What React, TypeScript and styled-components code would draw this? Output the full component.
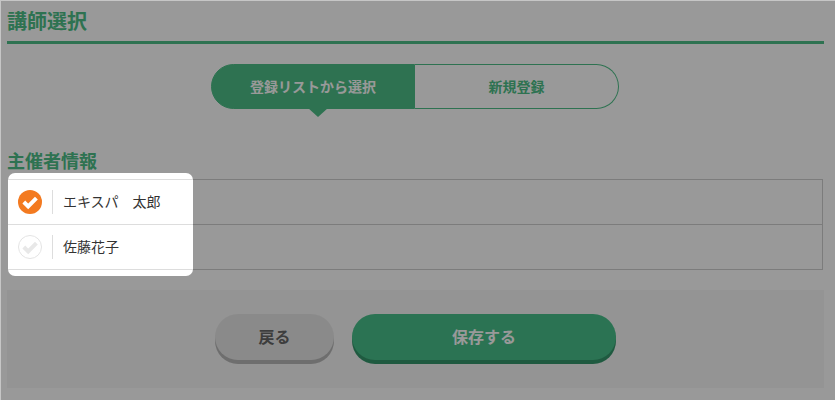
import { FunctionComponent } from "react";
import styled, { createGlobalStyle } from "styled-components";

const FONT = `"Liberation Sans", "Noto Sans CJK JP", sans-serif`;
const GREEN = "#4dbf87";

const GlobalStyle = createGlobalStyle`
  html, body {
    margin: 0;
    padding: 0;
    background: #c6c6c6;
  }
  body {
    padding: 1px 0 0 1px;
    font-family: ${FONT};
  }
`;

const Page = styled.div`
  position: relative;
  box-sizing: border-box;
  width: 834px;
  height: 399px;
  padding: 0 10px 0 6px;
  background: #fff;
  overflow: hidden;
`;

const Title = styled.h1`
  margin: 0;
  box-sizing: border-box;
  height: 43px;
  padding-top: 9px;
  font-size: 20px;
  line-height: 24px;
  font-weight: 700;
  color: ${GREEN};
  border-bottom: 3px solid ${GREEN};
  width: 817px;
`;

const Tabs = styled.div`
  display: flex;
  width: 408px;
  height: 45px;
  margin: 20px 0 0 204px;
`;

const Tab = styled.div<{ $active?: boolean }>`
  position: relative;
  box-sizing: border-box;
  display: flex;
  align-items: center;
  justify-content: center;
  width: 204px;
  padding-bottom: 1px;
  font-size: 14px;
  font-weight: 700;
  color: ${({ $active }) => ($active ? "#fff" : GREEN)};
  background: ${({ $active }) => ($active ? GREEN : "#fff")};
  border: 1px solid ${GREEN};
  border-left-width: ${({ $active }) => ($active ? "1px" : "0")};
  border-radius: ${({ $active }) => ($active ? "23px 0 0 23px" : "0 23px 23px 0")};

  ${({ $active }) =>
    $active &&
    `&::after {
      content: "";
      position: absolute;
      left: 50%;
      top: 100%;
      margin-left: -5px;
      border-style: solid;
      border-width: 9px 10px 0;
      border-color: ${GREEN} transparent transparent;
    }`}
`;

const SectionTitle = styled.h2`
  margin: 41px 0 0;
  font-size: 18px;
  line-height: 24px;
  font-weight: 700;
  color: ${GREEN};
`;

const Table = styled.div`
  margin: 5px 0 0 1px;
  width: 815px;
  border: 1px solid #cfcfcf;
  box-sizing: border-box;
`;

const EmptyRow = styled.div`
  height: 44px;
  & + & {
    height: 45px;
    border-top: 1px solid #cfcfcf;
    box-sizing: border-box;
  }
`;

const ButtonPanel = styled.div`
  display: flex;
  justify-content: center;
  align-items: flex-start;
  gap: 18px;
  width: 817px;
  height: 98px;
  margin-top: 20px;
  padding-top: 24px;
  box-sizing: border-box;
  background: #f7f7f7;
`;

const Button = styled.button<{ $primary?: boolean }>`
  width: ${({ $primary }) => ($primary ? "264px" : "119px")};
  height: 46px;
  border: 0;
  border-radius: 25px;
  margin: 0;
  padding: 0 0 2px;
  font-family: ${FONT};
  font-size: 16px;
  font-weight: 700;
  color: ${({ $primary }) => ($primary ? "#fff" : "#666")};
  background: ${({ $primary }) => ($primary ? "#48c08a" : "#e7e7e7")};
  box-shadow: 0 4px 0 ${({ $primary }) => ($primary ? "#35966b" : "#b8b8b8")};
`;

const Spotlight = styled.div`
  position: absolute;
  left: 7px;
  top: 172px;
  width: 185px;
  height: 103px;
  padding-top: 6px;
  box-sizing: border-box;
  background: #fff;
  border-radius: 7px;
  box-shadow: 0 0 0 1000px rgba(0, 0, 0, 0.4);
`;

const PersonRow = styled.div`
  display: flex;
  align-items: center;
  height: 45px;
  box-sizing: border-box;
  border-top: 1px solid #ddd;
  &:last-child {
    border-bottom: 1px solid #ddd;
    height: 46px;
  }
`;

const CheckCell = styled.div`
  display: flex;
  align-items: center;
  justify-content: center;
  width: 44px;
  height: 24px;
  border-right: 1px solid #ddd;
`;

const Name = styled.span`
  padding: 0 0 3px 10px;
  font-size: 14px;
  color: #333;
`;

const Check: FunctionComponent<{ on?: boolean }> = ({ on }) => (
  <svg width="24" height="24" viewBox="0 0 24 24">
    <circle
      cx="12"
      cy="12"
      r={on ? 12 : 11.5}
      fill={on ? "#f37a20" : "#fff"}
      stroke={on ? "none" : "#e4e4e4"}
    />
    <path
      d="M5.8 12l4.4 4.4 8.2-8.2"
      fill="none"
      stroke={on ? "#fff" : "#e8e8e8"}
      strokeWidth="4"
    />
  </svg>
);

const App: FunctionComponent = () => {
  return (
    <>
      <GlobalStyle />
      <Page>
        <Title>講師選択</Title>
        <Tabs>
          <Tab $active>登録リストから選択</Tab>
          <Tab>新規登録</Tab>
        </Tabs>
        <SectionTitle>主催者情報</SectionTitle>
        <Table>
          <EmptyRow />
          <EmptyRow />
        </Table>
        <ButtonPanel>
          <Button>戻る</Button>
          <Button $primary>保存する</Button>
        </ButtonPanel>
        <Spotlight>
          <PersonRow>
            <CheckCell>
              <Check on />
            </CheckCell>
            <Name>エキスパ　太郎</Name>
          </PersonRow>
          <PersonRow>
            <CheckCell>
              <Check />
            </CheckCell>
            <Name>佐藤花子</Name>
          </PersonRow>
        </Spotlight>
      </Page>
    </>
  );
};

export default App;
